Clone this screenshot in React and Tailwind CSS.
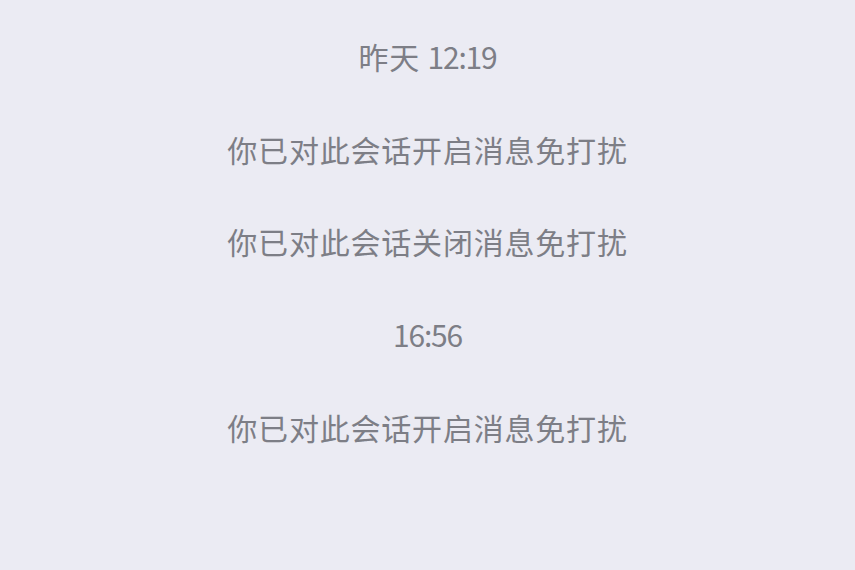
export default function App() {
  const rows = [
    { cn: "昨天 ", num: "12:19" },
    { cn: "你已对此会话开启消息免打扰" },
    { cn: "你已对此会话关闭消息免打扰" },
    { num: "16:56" },
    { cn: "你已对此会话开启消息免打扰" },
  ];
  return (
    <div
      className="w-[855px] h-[570px] bg-[#ebebf3] flex flex-col items-center pt-[10px] overflow-hidden"
      style={{ fontFamily: '"Noto Sans CJK SC", "Noto Sans", sans-serif' }}
    >
      {rows.map((r, i) => (
        <div
          key={i}
          className="h-[92.7px] flex items-center justify-center text-[30px] font-normal text-[#7d7e86] tracking-[0.8px] whitespace-pre"
        >
          {r.cn && <span>{r.cn}</span>}
          {r.num && <span className="tracking-[-1.2px]">{r.num}</span>}
        </div>
      ))}
    </div>
  );
}
